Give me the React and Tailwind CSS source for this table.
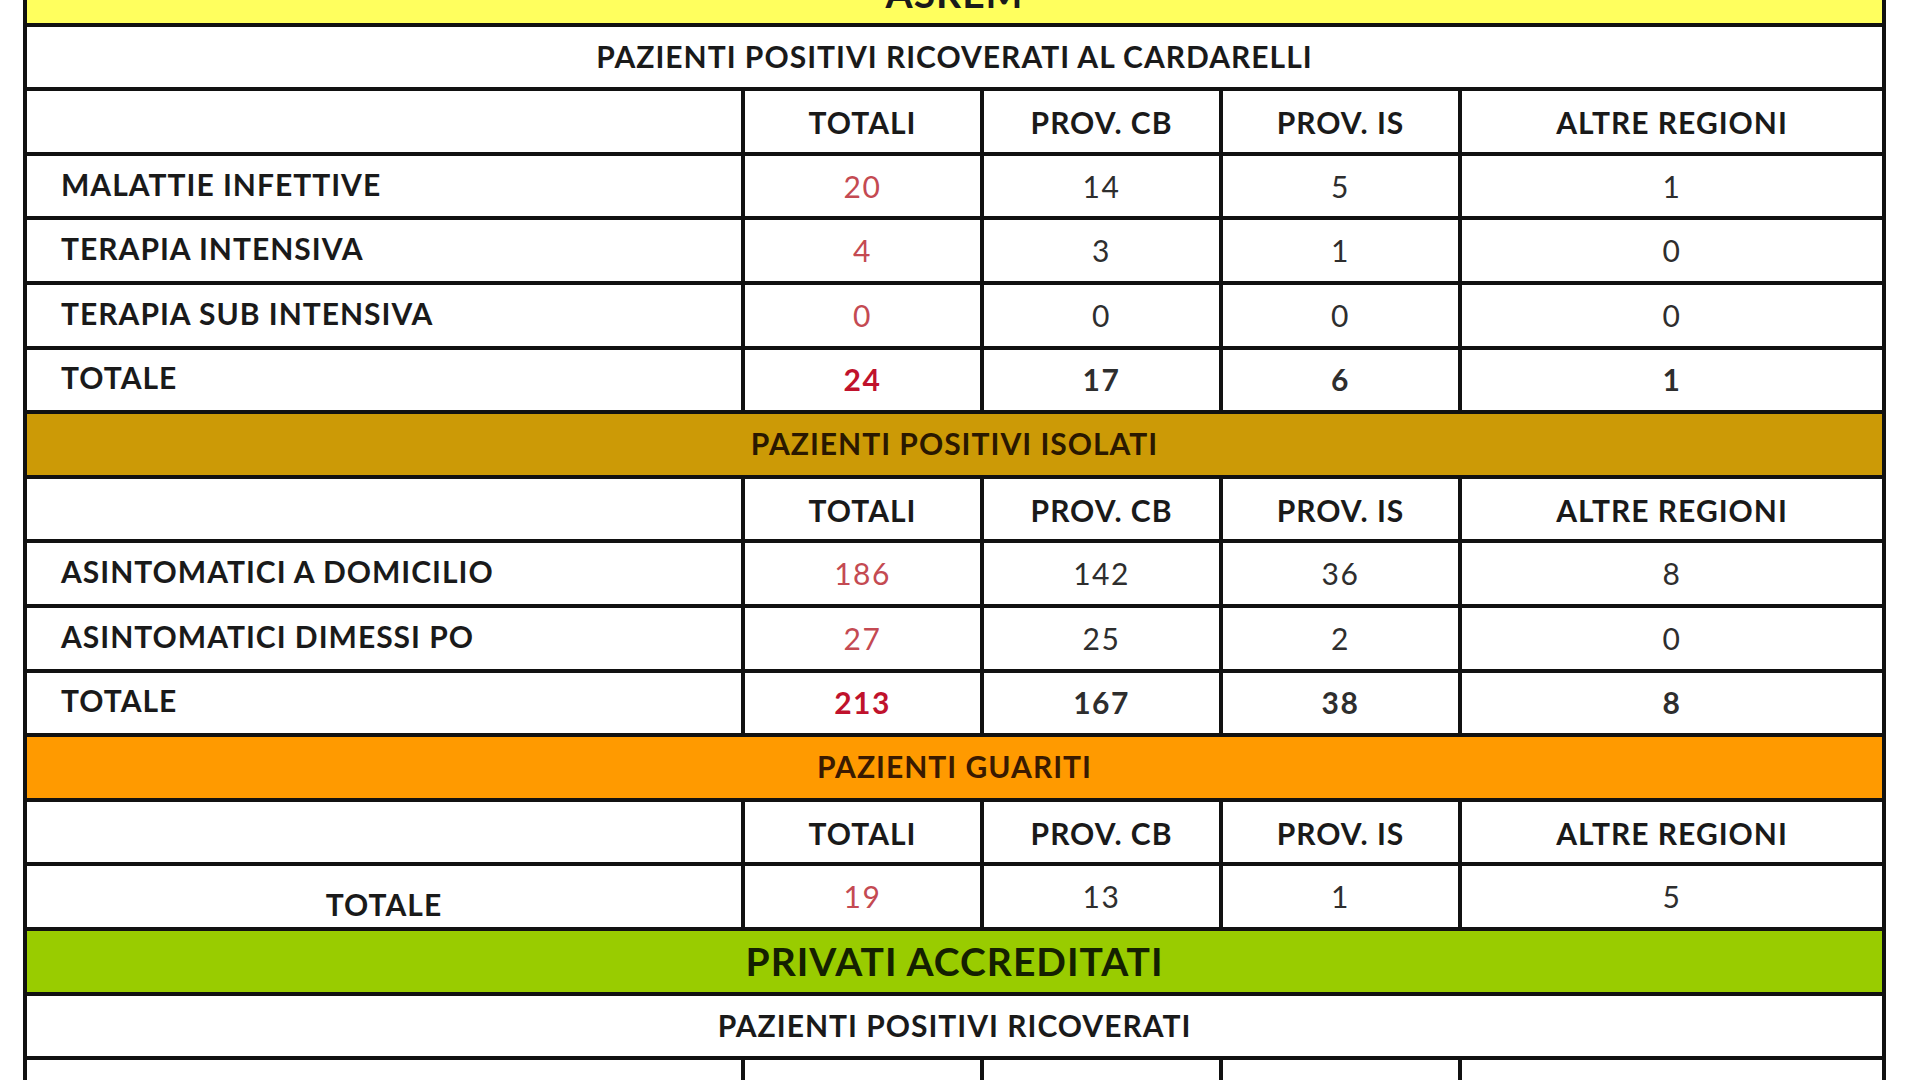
const cols = ["TOTALI", "PROV. CB", "PROV. IS", "ALTRE REGIONI"];

const sections = [
  {
    band: { label: "PAZIENTI POSITIVI RICOVERATI AL CARDARELLI", bg: "bg-white", text: "text-[#1a1a1a]" },
    rows: [
      { label: "MALATTIE INFETTIVE", values: [20, 14, 5, 1] },
      { label: "TERAPIA INTENSIVA", values: [4, 3, 1, 0] },
      { label: "TERAPIA SUB INTENSIVA", values: [0, 0, 0, 0] },
      { label: "TOTALE", values: [24, 17, 6, 1], bold: true },
    ],
  },
  {
    band: { label: "PAZIENTI POSITIVI ISOLATI", bg: "bg-[#cc9a06]", text: "text-[#2a1800]" },
    rows: [
      { label: "ASINTOMATICI A DOMICILIO", values: [186, 142, 36, 8] },
      { label: "ASINTOMATICI DIMESSI PO", values: [27, 25, 2, 0] },
      { label: "TOTALE", values: [213, 167, 38, 8], bold: true },
    ],
  },
  {
    band: { label: "PAZIENTI GUARITI", bg: "bg-[#ff9a00]", text: "text-[#3a1a00]" },
    rows: [{ label: "TOTALE", values: [19, 13, 1, 5], centered: true }],
  },
];

const cell = "border-[4px] border-[#111]";

const HeaderRow = () => (
  <tr className="h-[64.6px]">
    <td className={cell} />
    {cols.map((c) => (
      <td key={c} className={`${cell} text-center font-bold text-[30px] leading-none tracking-[1px] text-[#1a1a1a] pt-[1px]`}>
        {c}
      </td>
    ))}
  </tr>
);

const DataRow = ({ row }) => (
  <tr className="h-[64.6px]">
    <td
      className={`${cell} font-bold text-[30px] leading-none tracking-[1px] text-[#1a1a1a] ${
        row.centered ? "text-center align-bottom pb-[8px]" : "pl-[34px] pb-[5px]"
      }`}
    >
      {row.label}
    </td>
    {row.values.map((v, i) => (
      <td
        key={i}
        className={`${cell} text-center text-[30px] leading-none tracking-[1.5px] pb-[1px] ${
          row.bold ? "font-bold" : "font-normal"
        } ${
          i === 0
            ? row.bold
              ? "text-[#c0122c]"
              : "text-[#c44a52]"
            : "text-[#2e2e2e]"
        }`}
      >
        {v}
      </td>
    ))}
  </tr>
);

const BandRow = ({ label, bg, text, big = false }) => (
  <tr className={`h-[64.6px] ${bg}`}>
    <td
      colSpan={5}
      className={`${cell} text-center font-bold leading-none tracking-[1px] ${text} ${
        big ? "text-[39px]" : "text-[30px] pb-[2px]"
      }`}
    >
      {label}
    </td>
  </tr>
);

export default function App() {
  return (
    <div className="w-[1920px] h-[1080px] overflow-hidden bg-white font-['Lato','Open_Sans',sans-serif]">
      <table className="ml-[23px] -mt-[42px] w-[1859px] table-fixed border-collapse">
        <colgroup>
          <col className="w-[718px]" />
          <col className="w-[239px]" />
          <col className="w-[239px]" />
          <col className="w-[239px]" />
          <col className="w-[424px]" />
        </colgroup>
        <tbody>
          <tr className="h-[64.6px] bg-[#ffff5e]">
            <td
              colSpan={5}
              className={`${cell} text-center align-bottom font-bold text-[39px] leading-none tracking-[1px] text-[#1a1a1a] pb-[10px]`}
            >
              ASREM
            </td>
          </tr>
          {sections.map((s, si) => (
            <>
              <BandRow key={`b${si}`} {...s.band} />
              <HeaderRow key={`h${si}`} />
              {s.rows.map((r, ri) => (
                <DataRow key={`r${si}-${ri}`} row={r} />
              ))}
            </>
          ))}
          <BandRow label="PRIVATI ACCREDITATI" bg="bg-[#99cc00]" text="text-[#142000]" big />
          <BandRow label="PAZIENTI POSITIVI RICOVERATI" bg="bg-white" text="text-[#1a1a1a]" />
          <HeaderRow />
        </tbody>
      </table>
    </div>
  );
}
